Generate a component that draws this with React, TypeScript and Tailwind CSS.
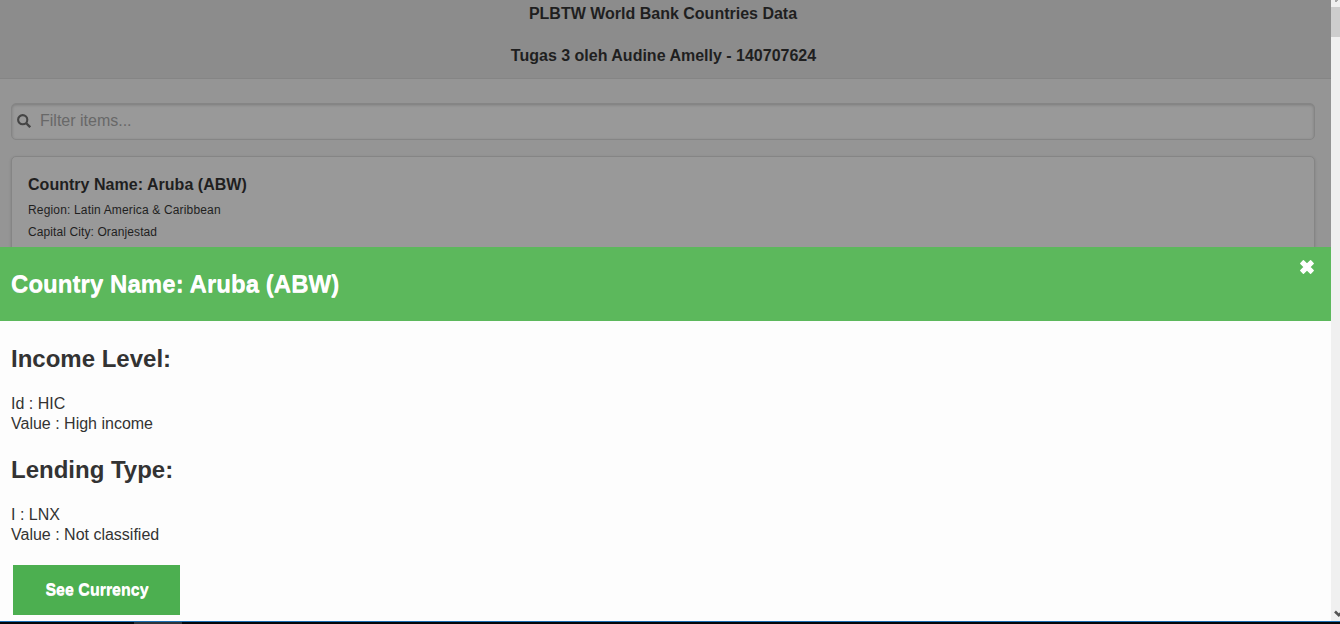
import React from "react";

function SearchIcon() {
  return (
    <svg width="14" height="14" viewBox="0 0 14 14" className="mb-px shrink-0">
      <circle cx="5.7" cy="5.7" r="4.6" fill="none" stroke="#454545" strokeWidth="2.1" />
      <path d="M9 9 13.2 13.2" fill="none" stroke="#454545" strokeWidth="2.4" />
    </svg>
  );
}

function CloseIcon() {
  return (
    <svg width="14" height="14" viewBox="0 0 14 14">
      <path
        fill="#fff"
        stroke="#fff"
        strokeWidth="1.4"
        strokeLinejoin="round"
        d="M13.2 3.4 10.6.8 7 4.3 3.4.8.8 3.4 4.3 7 .8 10.6l2.6 2.6L7 9.7l3.6 3.5 2.6-2.6L9.7 7z"
      />
    </svg>
  );
}

function Backdrop() {
  return (
    <div className="flex h-[247px] flex-col overflow-hidden bg-[#959595] text-[#1f1f1f]">
      <header className="flex h-[79px] shrink-0 flex-col items-center gap-[22px] border-b border-[#858585] bg-[#8c8c8c] pt-1 pr-1 text-base leading-5 font-bold">
        <h1 className="pr-px">PLBTW World Bank Countries Data</h1>
        <h1>Tugas 3 oleh Audine Amelly - 140707624</h1>
      </header>
      <div className="mt-6 mr-4 ml-[11px] flex h-[37px] shrink-0 items-center rounded-[5px] border border-[#858585] bg-[#999] pl-[5px] shadow-[inset_0_1px_3px_rgba(0,0,0,0.2)]">
        <SearchIcon />
        <span className="pb-0.5 pl-[9px] text-base leading-5 text-[#686868]">Filter items...</span>
      </div>
      <section className="mt-4 mr-4 ml-[11px] h-28 shrink-0 rounded-[5px] border border-[#858585] bg-[#999] px-4 pt-[18px] shadow-[0_1px_3px_rgba(0,0,0,0.15)]">
        <h2 className="text-base leading-5 font-bold tracking-[0.03px]">Country Name: Aruba (ABW)</h2>
        <p className="mt-[7px] text-xs leading-4 tracking-[0.16px]">Region: Latin America &amp; Caribbean</p>
        <p className="mt-1.5 text-xs leading-4 tracking-[0.1px]">Capital City: Oranjestad</p>
      </section>
    </div>
  );
}

function Details() {
  return (
    <main className="h-[300px] bg-[#fdfdfd] pt-[23px] pl-[11px] text-base leading-5 text-[#333]">
      <h2 className="text-2xl leading-[30px] font-bold">Income Level:</h2>
      <p className="mt-[20px]">Id : HIC</p>
      <p>Value : High income</p>
      <h2 className="mt-[21px] text-2xl leading-[30px] font-bold">Lending Type:</h2>
      <p className="mt-[20px]">I : LNX</p>
      <p>Value : Not classified</p>
      <button className="mt-5 ml-0.5 block h-[50px] w-[167px] bg-[#4caf50] pl-px text-base leading-5 font-bold text-white [text-shadow:0_1px_0_#f3f3f3]">
        See Currency
      </button>
    </main>
  );
}

export default function App() {
  return (
    <div className="flex h-[624px] w-[1340px] flex-col overflow-hidden font-['Liberation_Sans',Arial,sans-serif]">
      <div className="flex h-[621px]">
        <div className="w-[1331px]">
          <Backdrop />
          <header className="flex h-[74px] justify-between bg-[#5cb85c] pr-[17px] pl-[11px] text-white">
            <h1 className="pt-[22px] text-2xl leading-[30px] font-bold tracking-[0.05px] [text-shadow:0_1px_0_#f3f3f3]">
              Country Name: Aruba (ABW)
            </h1>
            <button aria-label="Close" className="mt-[13px] h-[14px]">
              <CloseIcon />
            </button>
          </header>
          <Details />
        </div>
        <aside className="flex w-[9px] flex-col bg-[#f0f0f0]">
          <svg width="9" height="7" viewBox="0 0 9 7">
            <path fill="#a8a8a8" d="M4 0h3v1H6v1H4z" />
          </svg>
          <div className="h-[30px] bg-[#cdcdcd]" />
          <svg width="9" height="14" viewBox="0 0 9 14" className="mt-auto">
            <path d="M4 4.5 7.8 8.2 11.6 4.5" fill="none" stroke="#555" strokeWidth="2.6" />
          </svg>
        </aside>
      </div>
      <footer className="flex h-[3px] border-t border-[#1c6fb5] bg-[#030608]">
        <div className="ml-[134px] h-0.5 w-12 bg-[#2f3438]" />
      </footer>
    </div>
  );
}
